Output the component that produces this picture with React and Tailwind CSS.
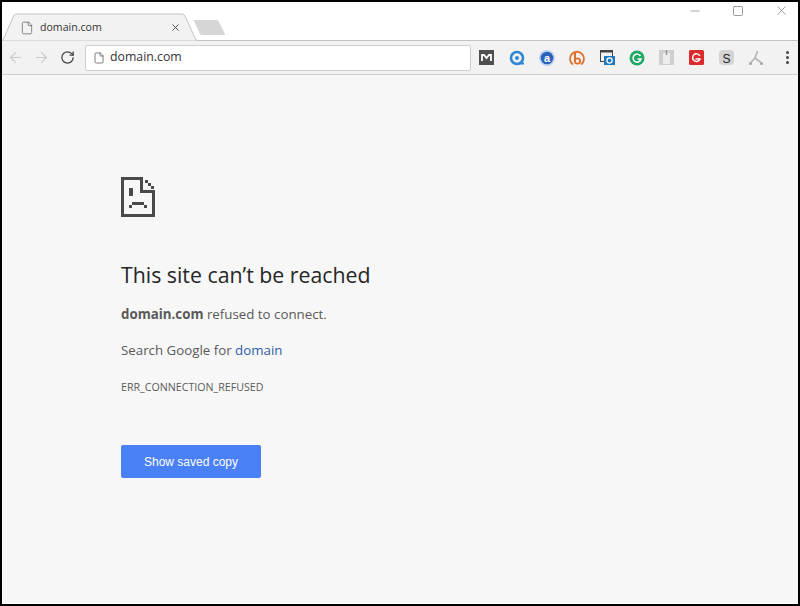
import { ArrowLeft, ArrowRight, RotateCw, File, Minus, Square, X } from 'lucide-react';

const sans = "font-['Open_Sans','Noto_Sans',sans-serif]";

function TabShape() {
  return (
    <svg width="230" height="28" viewBox="0 0 230 28" className="absolute left-0 top-[11px]">
      <path d="M-1 28 L1 27 L12 2 Q13 1 15 1 H180 Q182 1 183 3 L194 27 L196 28 Z" fill="#f2f2f2" stroke="#c4c4c4" />
      <path d="M192 8 Q191 7 193 7 H215 Q216 7 217 9 L223 21 Q223 22 222 22 H200 Q198 22 197.500 20 Z" fill="#d6d6d6" />
    </svg>
  );
}

function ExtensionIcons() {
  return (
    <div className="flex items-center h-full gap-[5px]">
      {/* M */}
      <svg width="25" height="18" viewBox="0 0 25 18">
        <rect x="4" y="1" width="15" height="15" fill="#4f4f4f" />
        <path d="M7 12 V6 H9 L11.500 9 L14 6 H16 V12" fill="none" stroke="#fff" strokeWidth="1.800" />
      </svg>
      {/* @ blue */}
      <svg width="25" height="18" viewBox="0 0 25 18">
        <circle cx="12" cy="9" r="6" fill="none" stroke="#2f86d8" strokeWidth="2.600" />
        <circle cx="12" cy="9" r="2" fill="#2f86d8" />
        <path d="M14 14.500 H19" stroke="#2f86d8" strokeWidth="2" />
      </svg>
      {/* amazon style a */}
      <svg width="25" height="18" viewBox="0 0 25 18">
        <circle cx="12" cy="9" r="8" fill="#bcd3f2" />
        <circle cx="12" cy="9" r="6.300" fill="#2b62b8" />
        <text x="12" y="12.500" textAnchor="middle" fontSize="11" fontWeight="700" fill="#fff" fontFamily="Liberation Sans">a</text>
      </svg>
      {/* bitly */}
      <svg width="25" height="18" viewBox="0 0 25 18">
        <path d="M8 15.500 A7 7 0 1 1 16 15.500" fill="none" stroke="#e0702c" strokeWidth="1.800" />
        <path d="M10 4 V12" stroke="#e0702c" strokeWidth="2" />
        <circle cx="12.500" cy="12" r="2.700" fill="none" stroke="#e0702c" strokeWidth="1.800" />
      </svg>
      {/* screenshot window */}
      <svg width="25" height="18" viewBox="0 0 25 18">
        <rect x="5.500" y="1.500" width="12" height="11" fill="#f2f2f2" stroke="#444" />
        <rect x="5" y="1" width="13" height="2.500" fill="#444" />
        <rect x="9" y="7" width="11" height="9" fill="#1f78bd" />
        <circle cx="14.500" cy="11.500" r="2.600" fill="none" stroke="#fff" strokeWidth="1.300" />
      </svg>
      {/* grammarly */}
      <svg width="25" height="18" viewBox="0 0 25 18">
        <circle cx="12" cy="9" r="7.500" fill="#22a866" />
        <path d="M15.500 7 A4 4 0 1 0 16 10 H12.500" fill="none" stroke="#fff" strokeWidth="1.500" />
      </svg>
      {/* gray clip */}
      <svg width="25" height="18" viewBox="0 0 25 18">
        <rect x="4" y="1" width="15" height="15" fill="#cfcfcf" />
        <rect x="8" y="4" width="7" height="11" rx="1" fill="#ececec" />
        <path d="M11.500 1 V6" stroke="#9a9a9a" strokeWidth="1.500" />
      </svg>
      {/* red G */}
      <svg width="25" height="18" viewBox="0 0 25 18">
        <rect x="4" y="1" width="15" height="15" rx="1.500" fill="#dc2b2b" />
        <path d="M14.800 6.800 A3.800 3.800 0 1 0 15 10 H10.500" fill="none" stroke="#fff" strokeWidth="1.500" />
      </svg>
      {/* S */}
      <svg width="25" height="18" viewBox="0 0 25 18">
        <rect x="4" y="1" width="15" height="15" rx="4" fill="#d4d4d4" />
        <text x="11.500" y="13.500" textAnchor="middle" fontSize="12" fill="#222" fontFamily="Liberation Sans">S</text>
      </svg>
      {/* gray fork */}
      <svg width="25" height="18" viewBox="0 0 25 18">
        <path d="M12.500 2 L10 9 L5.500 14 M10 9 L16.500 14" fill="none" stroke="#b5b5b5" strokeWidth="1.600" />
        <circle cx="5.500" cy="14.500" r="1.500" fill="#a8a8a8" />
        <circle cx="16.500" cy="14.500" r="1.500" fill="#a8a8a8" />
      </svg>
      {/* menu dots */}
      <div className="flex flex-col gap-[2px] ml-[11px] w-[3px]">
        <span className="w-[3px] h-[3px] bg-[#444] rounded-full" />
        <span className="w-[3px] h-[3px] bg-[#444] rounded-full" />
        <span className="w-[3px] h-[3px] bg-[#444] rounded-full" />
      </div>
    </div>
  );
}

function SadFile() {
  return (
    <svg width="36" height="42" viewBox="0 0 36 42" shapeRendering="crispEdges" fill="#4a4a4a" className="ml-[-1px]">
      <path d="M1 1 H23 V4 H4 V38 H32 V17 H35 V41 H1 Z" />
      <path d="M20 1 H23 V14 H35 V17 H20 Z" />
      <rect x="25" y="4" width="3" height="3" />
      <rect x="28" y="7" width="3" height="3" />
      <rect x="31" y="10" width="3" height="3" />
      <rect x="9" y="12" width="4" height="8" />
      <rect x="12" y="26" width="12" height="3" />
      <rect x="9" y="29" width="3" height="3" />
      <rect x="24" y="29" width="3" height="3" />
    </svg>
  );
}

export default function App() {
  return (
    <div className={`w-[800px] h-[606px] bg-black p-[2px] ${sans}`}>
      <div className="flex flex-col h-full bg-white">
        <div className="relative h-[39px] shrink-0 bg-white border-b border-[#c4c4c4]">
          <TabShape />
          <div className="absolute left-[19px] top-[17px] flex items-center w-[160px] h-[17px]">
            <File size={14} strokeWidth={1.300} className="text-[#666] ml-[-1px]" />
            <span className="ml-[6px] text-[10.600px] text-[#333] flex-1">domain.com</span>
            <X size={11} strokeWidth={2} className="text-[#444]" />
          </div>
          <div className="absolute right-[9px] top-[1px] flex items-center gap-[30px] text-[#666]">
            <Minus size={14} strokeWidth={1} />
            <Square size={12} strokeWidth={1.300} />
            <X size={15} strokeWidth={1} />
          </div>
        </div>
        <div className="flex items-center h-[34px] shrink-0 bg-[#f2f2f2] border-b border-[#d0d0d0] pl-[5px]">
          <ArrowLeft size={17} strokeWidth={1.500} className="text-[#c9c9c9]" />
          <ArrowRight size={17} strokeWidth={1.500} className="text-[#c9c9c9] ml-[9px]" />
          <RotateCw size={15} strokeWidth={2} className="text-[#444] ml-[10px]" />
          <div className="flex items-center w-[386px] h-[26px] ml-[10px] bg-white border border-[#cfcfcf] rounded-[2px] pl-[7px]">
            <File size={12} strokeWidth={1.500} className="text-[#555]" />
            <span className="ml-[5px] text-[12.300px] text-[#333]">domain.com</span>
          </div>
          <div className="ml-[4px] h-full">
            <ExtensionIcons />
          </div>
        </div>
        <main className="flex-1 bg-[#f7f7f7] pl-[118px] pt-[101px] text-[#5a5a5a] border-l border-b border-white">
          <SadFile />
          <h1 className="mt-[42px] text-[21.300px] leading-[30px] text-[#262626]">This site can’t be reached</h1>
          <p className="mt-[14px] text-[13.300px] leading-[20px]">
            <b className="font-bold">domain.com</b> refused to connect.
          </p>
          <p className="mt-[16px] text-[13.300px] leading-[20px]">
            Search Google for <span className="text-[#2f5ea8]">domain</span>
          </p>
          <p className="mt-[20px] text-[10.670px] leading-[14px]">ERR_CONNECTION_REFUSED</p>
          <button className="block mt-[51px] w-[140px] h-[33px] bg-[#4a80f5] rounded-[2px] text-white text-[12px] font-['Liberation_Sans',sans-serif]">
            Show saved copy
          </button>
        </main>
      </div>
    </div>
  );
}
